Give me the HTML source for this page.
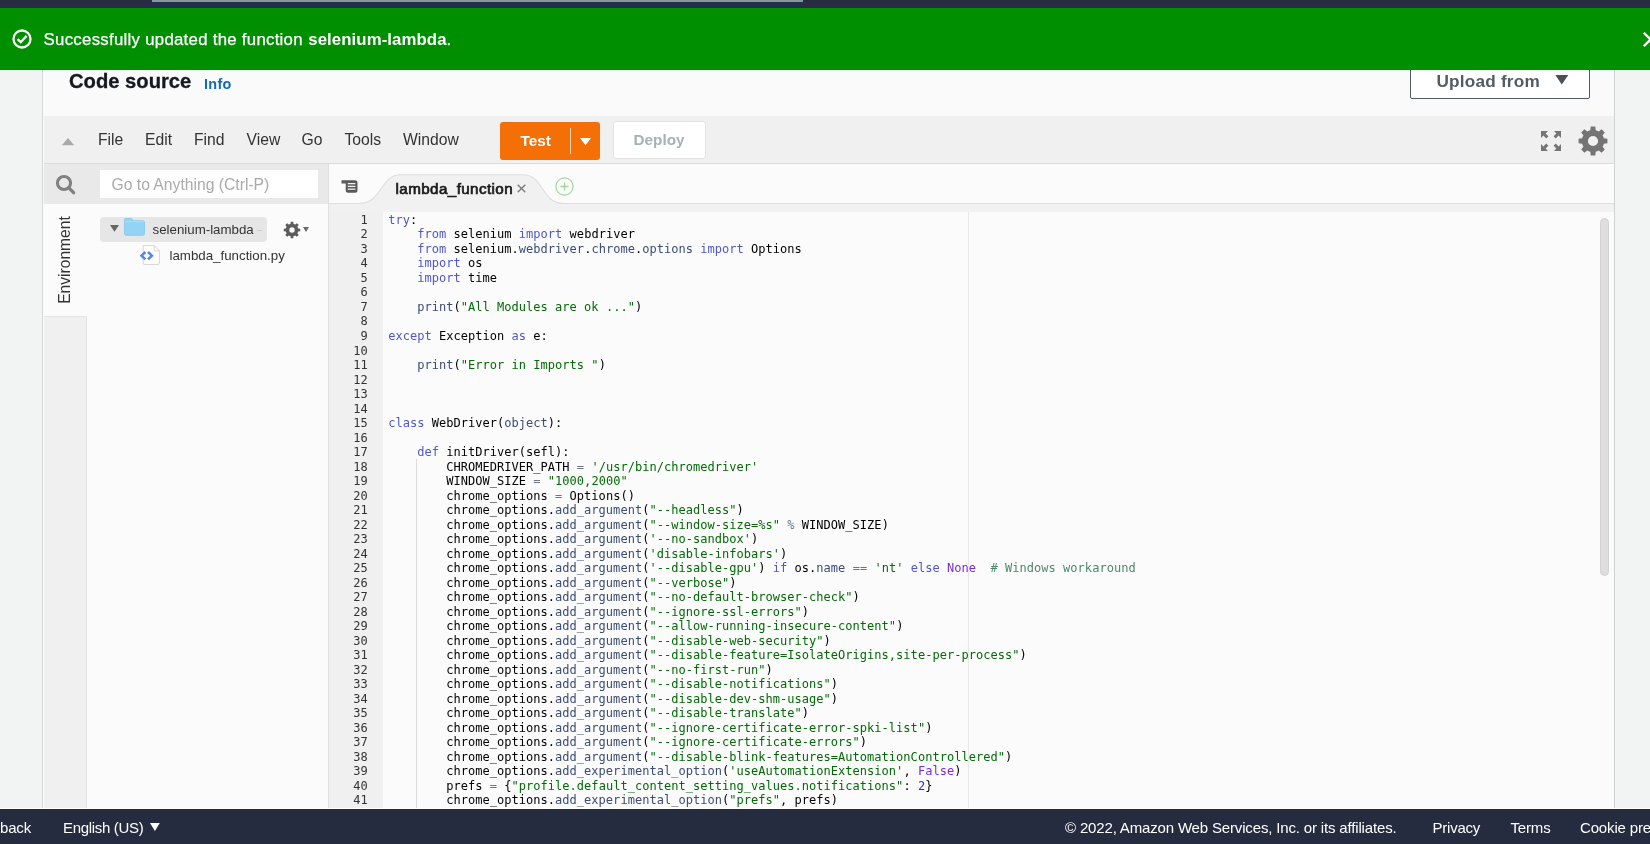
<!DOCTYPE html>
<html lang="en">
<head>
<meta charset="utf-8">
<title>selenium-lambda - Lambda</title>
<style>
html,body{margin:0;padding:0;}
body{will-change:transform;width:1650px;height:844px;overflow:hidden;position:relative;background:#f2f3f3;font-family:"Liberation Sans",sans-serif;color:#16191f;}
.abs{position:absolute;}
svg{position:absolute;overflow:visible;}
/* top */
#topstrip{left:0;top:0;width:1650px;height:7.5px;background:#2b2a49;z-index:20;}
#topstrip .a{left:0;top:0;width:1650px;height:2.4px;background:#22303c;}
#topstrip .b{left:152px;top:0;width:651px;height:2.2px;background:#8b969f;}
#topstrip .c{left:152px;top:2.2px;width:651px;height:5.3px;background:#232f49;}
#flash{left:0;top:7px;width:1650px;height:62.5px;background:#008f00;color:#fff;z-index:10;}
#flash .txt{left:43.6px;top:23.3px;font-size:16.8px;line-height:20px;white-space:nowrap;letter-spacing:0.28px;-webkit-text-stroke:0.25px #fff;}
#flash .txt b{letter-spacing:0.08px;margin-left:0.5px;-webkit-text-stroke:0;}
/* card */
#card{left:42.2px;top:60px;width:1573px;height:749px;background:#fafafa;border-left:1.9px solid #d3d7d7;border-right:1.3px solid #cfd2d2;box-sizing:border-box;}
#h2{left:69px;top:69px;font-size:20.2px;font-weight:bold;line-height:24px;white-space:nowrap;color:#16191f;-webkit-text-stroke:0.3px #16191f;}
#info{left:204px;top:75px;font-size:14.4px;font-weight:bold;line-height:18px;color:#0f6bb8;letter-spacing:0.3px;}
#upload{left:1410px;top:58.6px;width:180px;height:40px;box-sizing:border-box;border:1px solid #545b64;border-radius:2px;background:#fff;color:#545b64;font-weight:bold;font-size:17.2px;letter-spacing:0.2px;}
/* toolbar */
#toolbar{left:44px;top:116px;width:1570px;height:48px;background:#f0f0f0;border-bottom:1px solid #dcdcdc;box-sizing:border-box;}
.menu{top:130.5px;font-size:15.7px;line-height:18px;color:#333;white-space:nowrap;}
#test{left:500px;top:121.5px;width:99.5px;height:38.5px;background:#f46f05;border-radius:3px;color:#fff;font-weight:bold;font-size:15.3px;}
#deploy{left:612.5px;top:121px;width:93px;height:38px;background:#fff;border:1px solid #e2e2e2;border-radius:3px;box-sizing:border-box;color:#a6b2b5;font-weight:bold;font-size:15.3px;}
/* search + tabs */
#searchrow{left:44px;top:164px;width:284px;height:40px;background:#e9e9e9;}
#searchbox{left:99.5px;top:170px;width:218px;height:28px;background:#fff;}
#searchbox span{position:absolute;left:12px;top:5.7px;font-size:15.7px;line-height:18px;color:#aaa;white-space:nowrap;}
#tabrow{left:329px;top:164px;width:1285px;height:40px;background:#fbfbfb;}
#tabsep{left:329px;top:203px;width:1285px;height:9px;background:#f1f1f1;border-top:1px solid #dedede;box-sizing:border-box;}
#tabtxt{left:395.6px;top:179.6px;font-size:15.2px;letter-spacing:0.4px;line-height:18px;color:#1a1a1a;white-space:nowrap;-webkit-text-stroke:0.7px #1a1a1a;}
/* left */
#envstrip{left:44px;top:204px;width:42.5px;height:605px;background:#f0f0f0;border-right:1px solid #e2e2e2;box-sizing:border-box;}
#envtab{left:44px;top:204px;width:43px;height:113.3px;background:#fbfbfb;border-bottom:1px solid #e4e4e4;box-sizing:border-box;}
#envtxt{left:65px;top:260px;width:0;height:0;}
#envtxt span{position:absolute;left:-60px;top:-10px;width:120px;height:20px;line-height:20px;text-align:center;font-size:15.6px;color:#333;transform:rotate(-90deg);white-space:nowrap;}
#tree{left:87px;top:204px;width:241px;height:605px;background:#fbfbfb;}
#treesel{left:100px;top:216.5px;width:166.5px;height:25px;background:#e6e6e6;border-radius:4px;}
.tl{font-size:13.3px;line-height:16px;color:#333;white-space:nowrap;}
#treesep{left:328px;top:164px;width:1px;height:645px;background:#e0e0e0;}
/* editor */
#gutter{left:329px;top:212px;width:54px;height:597px;background:#f0f0f0;overflow:hidden;}
.gn{position:absolute;right:0;height:15px;line-height:15px;font-family:"DejaVu Sans Mono","Liberation Mono",monospace;font-size:12px;text-align:right;padding-right:15.2px;color:#333;}
#editor{left:383px;top:212px;width:1231px;height:597px;background:#fbfbfb;overflow:hidden;}
#code{left:5.2px;top:0;}
.ln{position:absolute;left:0;height:15px;line-height:15px;font-family:"DejaVu Sans Mono","Liberation Mono",monospace;font-size:12px;white-space:pre;color:#000;letter-spacing:0.031px;}
.ln i{font-style:normal;}
.k{color:#4f57c9;}
.f{color:#3c4c72;}
.s{color:#036a07;}
.n{color:#7d2bd6;}
.m{color:#2b2bd0;}
.o{color:#687687;}
.c{color:#4c886b;}
#pm{left:584.5px;top:0;width:1px;height:598px;background:#e8e8e8;}
#ig{left:33px;top:246.5px;width:1px;height:351px;background:#dcdcdc;}
#vscroll{left:1600px;top:218px;width:9px;height:358px;background:#dedede;border-radius:5px;border:1px solid #d2d2d2;box-sizing:border-box;}
/* footer */
#footer{left:0;top:808px;width:1650px;height:36px;border-top:1.5px solid #fff;box-sizing:border-box;background:#252c3f;color:#fff;font-size:15px;z-index:10;}
#footer span{position:absolute;top:9.6px;line-height:18px;white-space:nowrap;letter-spacing:-0.16px;}
</style>
</head>
<body>
<div id="topstrip" class="abs"><div class="abs a"></div><div class="abs b"></div><div class="abs c"></div></div>

<div id="card" class="abs"></div>
<div id="h2" class="abs">Code source</div>
<div id="info" class="abs">Info</div>
<div id="upload" class="abs"><span class="abs" style="left:25.5px;top:11.4px;line-height:20px;white-space:nowrap">Upload from</span>
  <svg style="left:144px;top:15.8px" width="14" height="10" viewBox="0 0 14 10"><path d="M0.3,0 L13.3,0 L6.8,9.6Z" fill="#4a505a"/></svg>
</div>

<div id="toolbar" class="abs"></div>
<svg style="left:61px;top:137px" width="14" height="9" viewBox="0 0 14 9"><path d="M7,1 L13.2,8.3 L0.8,8.3Z" fill="#a9a9a9"/></svg>
<div class="abs menu" style="left:98px">File</div>
<div class="abs menu" style="left:145px">Edit</div>
<div class="abs menu" style="left:194px">Find</div>
<div class="abs menu" style="left:246.5px">View</div>
<div class="abs menu" style="left:301.5px">Go</div>
<div class="abs menu" style="left:344.5px">Tools</div>
<div class="abs menu" style="left:403px">Window</div>
<div id="test" class="abs"><span class="abs" style="left:20.5px;top:10px;line-height:18px">Test</span>
  <div class="abs" style="left:69.5px;top:6px;width:1px;height:26.5px;background:#fbd3ae"></div>
  <svg style="left:79.5px;top:16px" width="11" height="8" viewBox="0 0 11 8"><path d="M0,0 L11,0 L5.5,7.2Z" fill="#fff"/></svg>
</div>
<div id="deploy" class="abs"><span class="abs" style="left:20px;top:9px;line-height:18px">Deploy</span></div>
<!-- fullscreen icon -->
<svg style="left:1540.5px;top:131px" width="20" height="20" viewBox="0 0 20 20">
  <g fill="#757575">
    <path d="M0,0 H7 L4.6,2.4 L7.4,5.2 L5.2,7.4 L2.4,4.6 L0,7Z"/>
    <path d="M20,0 V7 L17.6,4.6 L14.8,7.4 L12.6,5.2 L15.4,2.4 L13,0Z"/>
    <path d="M0,20 V13 L2.4,15.4 L5.2,12.6 L7.4,14.8 L4.6,17.6 L7,20Z"/>
    <path d="M20,20 H13 L15.4,17.6 L12.6,14.8 L14.8,12.6 L17.6,15.4 L20,13Z"/>
  </g>
</svg>
<!-- big gear -->
<svg style="left:1593px;top:141px" width="1" height="1"><path fill="#747474" fill-rule="evenodd" d="M-2.70,-10.87 L-2.28,-14.42 L2.28,-14.42 L2.70,-10.87 A11.20,11.20 0 0,1 5.78,-9.60 L8.58,-11.81 L11.81,-8.58 L9.60,-5.78 A11.20,11.20 0 0,1 10.87,-2.70 L14.42,-2.28 L14.42,2.28 L10.87,2.70 A11.20,11.20 0 0,1 9.60,5.78 L11.81,8.58 L8.58,11.81 L5.78,9.60 A11.20,11.20 0 0,1 2.70,10.87 L2.28,14.42 L-2.28,14.42 L-2.70,10.87 A11.20,11.20 0 0,1 -5.78,9.60 L-8.58,11.81 L-11.81,8.58 L-9.60,5.78 A11.20,11.20 0 0,1 -10.87,2.70 L-14.42,2.28 L-14.42,-2.28 L-10.87,-2.70 A11.20,11.20 0 0,1 -9.60,-5.78 L-11.81,-8.58 L-8.58,-11.81 L-5.78,-9.60 A11.20,11.20 0 0,1 -2.70,-10.87Z M5.10,0 A5.10,5.10 0 1,0 -5.10,0 A5.10,5.10 0 1,0 5.10,0Z"/></svg>

<div id="searchrow" class="abs"></div>
<svg style="left:55px;top:174px" width="22" height="22" viewBox="0 0 22 22"><circle cx="9" cy="9" r="6.55" fill="none" stroke="#808080" stroke-width="3.1"/><path d="M13.9,13.9 L18.6,18.7" stroke="#808080" stroke-width="3.3" stroke-linecap="round"/></svg>
<div id="searchbox" class="abs"><span>Go to Anything (Ctrl-P)</span></div>
<div id="tabrow" class="abs"></div>
<div id="tabsep" class="abs"></div>
<!-- tab shape -->
<svg style="left:329px;top:164px" width="300" height="48" viewBox="0 0 300 48">
  <path d="M31,39.3 C53,39.3 51,10.8 72,10.8 L194,10.8 C215,10.8 212,39.3 234,39.3 L234,41 L31,41Z" fill="#f1f1f1"/>
  <path d="M31,39.3 C53,39.3 51,10.8 72,10.8 L194,10.8 C215,10.8 212,39.3 234,39.3" fill="none" stroke="#dedede" stroke-width="1.1"/>
</svg>
<!-- tab menu icon -->
<svg style="left:341px;top:180px" width="17" height="13" viewBox="0 0 17 13">
  <path d="M0.5,0.3 H14 Q16.5,0.3 16.5,2.8 V10.2 Q16.5,12.7 14,12.7 H7.2 Q4.7,12.7 4.7,10.2 V3.6 H0.5Z" fill="#5a5a5a"/>
  <path d="M6.8,3.6 H14.4 M6.8,6.4 H14.4 M6.8,9.2 H14.4" stroke="#f1f1f1" stroke-width="1.3"/>
</svg>
<div id="tabtxt" class="abs">lambda_function</div>
<svg style="left:517px;top:184.3px" width="9" height="9" viewBox="0 0 9 9"><path d="M0.7,0.7 L8.3,8.3 M8.3,0.7 L0.7,8.3" stroke="#777" stroke-width="1.3"/></svg>
<svg style="left:554.5px;top:176.5px" width="19" height="19" viewBox="0 0 19 19"><circle cx="9.5" cy="9.5" r="8.6" fill="#fbfbfb" stroke="#a3d5a3" stroke-width="1.2"/><path d="M9.5,5.4 V13.6 M5.4,9.5 H13.6" stroke="#a3d5a3" stroke-width="1.3"/></svg>

<div id="envstrip" class="abs"></div>
<div id="envtab" class="abs"></div>
<div id="envtxt" class="abs"><span>Environment</span></div>
<div id="tree" class="abs"></div>
<div id="treesel" class="abs"></div>
<svg style="left:109.5px;top:225px" width="9" height="7" viewBox="0 0 9 7"><path d="M0,0 H9 L4.5,6.8Z" fill="#666"/></svg>
<!-- folder -->
<svg style="left:124px;top:218.2px" width="21" height="18" viewBox="0 0 21 18"><path d="M1.8,0.5 H6.8 Q8,0.5 8.6,1.5 L9.3,2.8 H18.8 Q20.5,2.8 20.5,4.5 V15.6 Q20.5,17.3 18.8,17.3 H2.2 Q0.5,17.3 0.5,15.6 V1.8 Q0.5,0.5 1.8,0.5Z" fill="#93d4f6" stroke="#7fc6ec" stroke-width="0.8"/><path d="M1.4,3.6 H19.6" stroke="#a9ddf8" stroke-width="1"/></svg>
<div class="abs tl" style="left:152.5px;top:221.6px">selenium-lambda</div>
<div class="abs" style="left:257px;top:229.5px;width:5px;height:1.2px;background:#cfcfcf"></div>
<svg style="left:291.6px;top:229.8px" width="1" height="1"><path fill="#5c5c5c" fill-rule="evenodd" d="M-1.52,-6.11 L-1.30,-8.20 L1.30,-8.20 L1.52,-6.11 A6.30,6.30 0 0,1 3.25,-5.40 L4.88,-6.71 L6.71,-4.88 L5.40,-3.25 A6.30,6.30 0 0,1 6.11,-1.52 L8.20,-1.30 L8.20,1.30 L6.11,1.52 A6.30,6.30 0 0,1 5.40,3.25 L6.71,4.88 L4.88,6.71 L3.25,5.40 A6.30,6.30 0 0,1 1.52,6.11 L1.30,8.20 L-1.30,8.20 L-1.52,6.11 A6.30,6.30 0 0,1 -3.25,5.40 L-4.88,6.71 L-6.71,4.88 L-5.40,3.25 A6.30,6.30 0 0,1 -6.11,1.52 L-8.20,1.30 L-8.20,-1.30 L-6.11,-1.52 A6.30,6.30 0 0,1 -5.40,-3.25 L-6.71,-4.88 L-4.88,-6.71 L-3.25,-5.40 A6.30,6.30 0 0,1 -1.52,-6.11Z M2.70,0 A2.70,2.70 0 1,0 -2.70,0 A2.70,2.70 0 1,0 2.70,0Z"/></svg>
<svg style="left:302.8px;top:227.2px" width="6" height="5" viewBox="0 0 6 5"><path d="M0,0 H6 L3,5Z" fill="#6a6a6a"/></svg>
<!-- file icon -->
<svg style="left:140px;top:245px" width="21" height="20" viewBox="0 0 21 20">
  <path d="M3.2,0.6 H14.2 L19.4,5.8 V18.2 Q19.4,19.4 18.2,19.4 H4.4 Q3.2,19.4 3.2,18.2Z" fill="#fff" stroke="#d4d4d4" stroke-width="1"/>
  <path d="M14.2,0.6 V5.8 H19.4" fill="none" stroke="#d4d4d4" stroke-width="1"/>
  <path d="M5.4,7 L1.5,10.7 L5.4,14.4 M8,7 L11.9,10.7 L8,14.4" fill="none" stroke="#5585ee" stroke-width="2.5" stroke-linejoin="miter"/>
</svg>
<div class="abs tl" style="left:169.5px;top:247.6px">lambda_function.py</div>
<div id="treesep" class="abs"></div>

<div id="gutter" class="abs">
<div class="gn" style="top:1px">1</div>
<div class="gn" style="top:15px">2</div>
<div class="gn" style="top:30px">3</div>
<div class="gn" style="top:44px">4</div>
<div class="gn" style="top:59px">5</div>
<div class="gn" style="top:73px">6</div>
<div class="gn" style="top:88px">7</div>
<div class="gn" style="top:102px">8</div>
<div class="gn" style="top:117px">9</div>
<div class="gn" style="top:132px">10</div>
<div class="gn" style="top:146px">11</div>
<div class="gn" style="top:161px">12</div>
<div class="gn" style="top:175px">13</div>
<div class="gn" style="top:190px">14</div>
<div class="gn" style="top:204px">15</div>
<div class="gn" style="top:219px">16</div>
<div class="gn" style="top:233px">17</div>
<div class="gn" style="top:248px">18</div>
<div class="gn" style="top:262px">19</div>
<div class="gn" style="top:277px">20</div>
<div class="gn" style="top:291px">21</div>
<div class="gn" style="top:306px">22</div>
<div class="gn" style="top:320px">23</div>
<div class="gn" style="top:335px">24</div>
<div class="gn" style="top:349px">25</div>
<div class="gn" style="top:364px">26</div>
<div class="gn" style="top:378px">27</div>
<div class="gn" style="top:393px">28</div>
<div class="gn" style="top:407px">29</div>
<div class="gn" style="top:422px">30</div>
<div class="gn" style="top:436px">31</div>
<div class="gn" style="top:451px">32</div>
<div class="gn" style="top:465px">33</div>
<div class="gn" style="top:480px">34</div>
<div class="gn" style="top:494px">35</div>
<div class="gn" style="top:509px">36</div>
<div class="gn" style="top:523px">37</div>
<div class="gn" style="top:538px">38</div>
<div class="gn" style="top:552px">39</div>
<div class="gn" style="top:567px">40</div>
<div class="gn" style="top:581px">41</div>
</div>
<div id="editor" class="abs">
<div id="pm" class="abs"></div>
<div id="ig" class="abs"></div>
<div id="code" class="abs">
<div class="ln" style="top:1px"><i class="k">try</i>:</div>
<div class="ln" style="top:15px">    <i class="k">from</i> selenium <i class="k">import</i> webdriver</div>
<div class="ln" style="top:30px">    <i class="k">from</i> selenium.<i class="f">webdriver</i>.<i class="f">chrome</i>.<i class="f">options</i> <i class="k">import</i> Options</div>
<div class="ln" style="top:44px">    <i class="k">import</i> os</div>
<div class="ln" style="top:59px">    <i class="k">import</i> time</div>
<div class="ln" style="top:73px"></div>
<div class="ln" style="top:88px">    <i class="f">print</i>(<i class="s">"All Modules are ok ..."</i>)</div>
<div class="ln" style="top:102px"></div>
<div class="ln" style="top:117px"><i class="k">except</i> Exception <i class="k">as</i> e:</div>
<div class="ln" style="top:132px"></div>
<div class="ln" style="top:146px">    <i class="f">print</i>(<i class="s">"Error in Imports "</i>)</div>
<div class="ln" style="top:161px"></div>
<div class="ln" style="top:175px"></div>
<div class="ln" style="top:190px"></div>
<div class="ln" style="top:204px"><i class="k">class</i> WebDriver(<i class="f">object</i>):</div>
<div class="ln" style="top:219px"></div>
<div class="ln" style="top:233px">    <i class="k">def</i> initDriver(sefl):</div>
<div class="ln" style="top:248px">        CHROMEDRIVER_PATH <i class="o">=</i> <i class="s">'/usr/bin/chromedriver'</i></div>
<div class="ln" style="top:262px">        WINDOW_SIZE <i class="o">=</i> <i class="s">"1000,2000"</i></div>
<div class="ln" style="top:277px">        chrome_options <i class="o">=</i> Options()</div>
<div class="ln" style="top:291px">        chrome_options.<i class="f">add_argument</i>(<i class="s">"--headless"</i>)</div>
<div class="ln" style="top:306px">        chrome_options.<i class="f">add_argument</i>(<i class="s">"--window-size=%s"</i> <i class="o">%</i> WINDOW_SIZE)</div>
<div class="ln" style="top:320px">        chrome_options.<i class="f">add_argument</i>(<i class="s">'--no-sandbox'</i>)</div>
<div class="ln" style="top:335px">        chrome_options.<i class="f">add_argument</i>(<i class="s">'disable-infobars'</i>)</div>
<div class="ln" style="top:349px">        chrome_options.<i class="f">add_argument</i>(<i class="s">'--disable-gpu'</i>) <i class="k">if</i> os.<i class="f">name</i> <i class="o">==</i> <i class="s">'nt'</i> <i class="k">else</i> <i class="n">None</i>  <i class="c"># Windows workaround</i></div>
<div class="ln" style="top:364px">        chrome_options.<i class="f">add_argument</i>(<i class="s">"--verbose"</i>)</div>
<div class="ln" style="top:378px">        chrome_options.<i class="f">add_argument</i>(<i class="s">"--no-default-browser-check"</i>)</div>
<div class="ln" style="top:393px">        chrome_options.<i class="f">add_argument</i>(<i class="s">"--ignore-ssl-errors"</i>)</div>
<div class="ln" style="top:407px">        chrome_options.<i class="f">add_argument</i>(<i class="s">"--allow-running-insecure-content"</i>)</div>
<div class="ln" style="top:422px">        chrome_options.<i class="f">add_argument</i>(<i class="s">"--disable-web-security"</i>)</div>
<div class="ln" style="top:436px">        chrome_options.<i class="f">add_argument</i>(<i class="s">"--disable-feature=IsolateOrigins,site-per-process"</i>)</div>
<div class="ln" style="top:451px">        chrome_options.<i class="f">add_argument</i>(<i class="s">"--no-first-run"</i>)</div>
<div class="ln" style="top:465px">        chrome_options.<i class="f">add_argument</i>(<i class="s">"--disable-notifications"</i>)</div>
<div class="ln" style="top:480px">        chrome_options.<i class="f">add_argument</i>(<i class="s">"--disable-dev-shm-usage"</i>)</div>
<div class="ln" style="top:494px">        chrome_options.<i class="f">add_argument</i>(<i class="s">"--disable-translate"</i>)</div>
<div class="ln" style="top:509px">        chrome_options.<i class="f">add_argument</i>(<i class="s">"--ignore-certificate-error-spki-list"</i>)</div>
<div class="ln" style="top:523px">        chrome_options.<i class="f">add_argument</i>(<i class="s">"--ignore-certificate-errors"</i>)</div>
<div class="ln" style="top:538px">        chrome_options.<i class="f">add_argument</i>(<i class="s">"--disable-blink-features=AutomationControllered"</i>)</div>
<div class="ln" style="top:552px">        chrome_options.<i class="f">add_experimental_option</i>(<i class="s">'useAutomationExtension'</i>, <i class="n">False</i>)</div>
<div class="ln" style="top:567px">        prefs <i class="o">=</i> {<i class="s">"profile.default_content_setting_values.notifications"</i>: <i class="m">2</i>}</div>
<div class="ln" style="top:581px">        chrome_options.<i class="f">add_experimental_option</i>(<i class="s">"prefs"</i>, prefs)</div>
</div>
</div>
<div id="vscroll" class="abs"></div>

<div id="flash" class="abs">
  <svg style="left:12.4px;top:22.3px" width="20" height="20" viewBox="0 0 20 20"><circle cx="10" cy="10" r="8.5" fill="none" stroke="#fff" stroke-width="2.3"/><path d="M5.6,10.2 L8.7,13.2 L14.6,6.9" fill="none" stroke="#fff" stroke-width="2.3" stroke-linejoin="miter"/></svg>
  <div class="abs txt">Successfully updated the function <b>selenium-lambda</b>.</div>
  <svg style="left:1642.6px;top:25.2px" width="15" height="15" viewBox="0 0 15 15"><path d="M0.8,0.8 L14.2,14.2 M14.2,0.8 L0.8,14.2" stroke="#fff" stroke-width="2.3"/></svg>
</div>

<div id="footer" class="abs">
  <span style="left:0">back</span>
  <span style="left:63px;letter-spacing:-0.32px">English (US)</span>
  <svg style="left:150.3px;top:14.1px" width="10" height="8" viewBox="0 0 10 8"><path d="M0,0 H9.8 L4.9,8Z" fill="#fff"/></svg>
  <span style="left:1065px">© 2022, Amazon Web Services, Inc. or its affiliates.</span>
  <span style="left:1432.5px;letter-spacing:-0.22px">Privacy</span>
  <span style="left:1510.5px">Terms</span>
  <span style="left:1580px">Cookie preferences</span>
</div>
</body>
</html>
